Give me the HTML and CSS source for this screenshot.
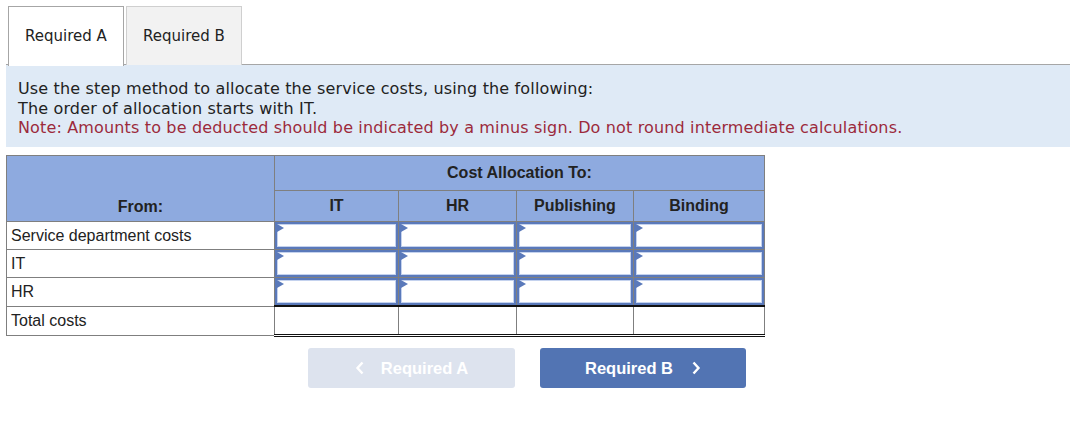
FILE: index.html
```html
<!DOCTYPE html>
<html>
<head>
<meta charset="utf-8">
<link rel="stylesheet" href="styles.css">
</head>
<body>
<div class="page">
  <div class="tabs">
    <div class="tab tab-active">Required A</div>
    <div class="tab">Required B</div>
  </div>
  <div class="info">
    <div>Use the step method to allocate the service costs, using the following:</div>
    <div>The order of allocation starts with IT.</div>
    <div class="note">Note: Amounts to be deducted should be indicated by a minus sign. Do not round intermediate calculations.</div>
  </div>
  <table class="grid">
    <colgroup>
      <col class="c-from"><col class="c-it"><col class="c-hr"><col class="c-pub"><col class="c-bind">
    </colgroup>
    <thead>
      <tr class="h1">
        <th class="from" rowspan="2">From:</th>
        <th colspan="4">Cost Allocation To:</th>
      </tr>
      <tr class="h2">
        <th>IT</th><th>HR</th><th>Publishing</th><th>Binding</th>
      </tr>
    </thead>
    <tbody>
      <tr>
        <td class="label">Service department costs</td>
        <td class="in"><div class="box"><span class="flag"></span></div></td>
        <td class="in"><div class="box"><span class="flag"></span></div></td>
        <td class="in"><div class="box"><span class="flag"></span></div></td>
        <td class="in"><div class="box"><span class="flag"></span></div></td>
      </tr>
      <tr>
        <td class="label">IT</td>
        <td class="in"><div class="box"><span class="flag"></span></div></td>
        <td class="in"><div class="box"><span class="flag"></span></div></td>
        <td class="in"><div class="box"><span class="flag"></span></div></td>
        <td class="in"><div class="box"><span class="flag"></span></div></td>
      </tr>
      <tr>
        <td class="label">HR</td>
        <td class="in"><div class="box"><span class="flag"></span></div></td>
        <td class="in"><div class="box"><span class="flag"></span></div></td>
        <td class="in"><div class="box"><span class="flag"></span></div></td>
        <td class="in"><div class="box"><span class="flag"></span></div></td>
      </tr>
      <tr class="total">
        <td class="label">Total costs</td>
        <td class="tot"></td>
        <td class="tot"></td>
        <td class="tot"></td>
        <td class="tot"></td>
      </tr>
    </tbody>
  </table>
  <div class="nav">
    <div class="btn btn-off">
      <svg class="chev" width="10" height="14" viewBox="0 0 10 14"><path d="M7.5 1.5 L2.5 7 L7.5 12.5" fill="none" stroke="#fff" stroke-width="2.4"/></svg>
      <span>Required A</span>
    </div>
    <div class="btn btn-on">
      <span>Required B</span>
      <svg class="chev" width="10" height="14" viewBox="0 0 10 14"><path d="M2.5 1.5 L7.5 7 L2.5 12.5" fill="none" stroke="#fff" stroke-width="2.4"/></svg>
    </div>
  </div>
</div>
</body>
</html>
```
FILE: styles.css
```css
html, body {
  margin: 0;
  padding: 0;
  background: #fff;
}
.page {
  padding: 6px 0 0 6px;
  width: 1064px;
}
.tabs {
  display: flex;
  gap: 2px;
  padding-left: 2px;
  border-bottom: 1px solid #a6a6a6;
  height: 58px;
}
.tab {
  width: 114px;
  height: 57px;
  border: 1px solid #cfcfcf;
  border-bottom: none;
  background: #f2f2f2;
  font-family: "DejaVu Sans", Verdana, sans-serif;
  font-size: 15px;
  color: #222;
  display: flex;
  align-items: center;
  justify-content: center;
  padding-bottom: 1px;
}
.tab-active {
  background: #fff;
  border-color: #a6a6a6;
  height: 58px;
  margin-bottom: -1px;
  position: relative;
}
.info {
  background: #dfeaf6;
  height: 82px;
  box-sizing: border-box;
  padding: 14px 0 0 12px;
  font-family: "DejaVu Sans", Verdana, sans-serif;
  font-size: 16px;
  letter-spacing: 0.15px;
  line-height: 19.5px;
  color: #222;
}
.note {
  color: #9c2a3c;
}
.grid {
  margin-top: 8px;
  border-collapse: collapse;
  font-family: "Liberation Sans", Arial, sans-serif;
  font-size: 16px;
  color: #222;
  table-layout: fixed;
  width: 758px;
}
.c-from { width: 268px; }
.c-it { width: 124px; }
.c-hr { width: 118px; }
.c-pub { width: 117px; }
.c-bind { width: 131px; }
.grid th {
  background: #8eaadf;
  border: 1px solid #7f7f7f;
  font-weight: bold;
  color: #222;
  padding: 0;
}
.h1 th { height: 34px; }
.h2 th { height: 29px; padding-bottom: 1px; }
.grid th.from {
  vertical-align: bottom;
  padding-bottom: 5px;
}
.grid td {
  border: 1px solid #7f7f7f;
  padding: 0;
  height: 27px;
  line-height: 18px;
}
.grid td.label {
  padding-left: 4px;
}
.grid td.in {
  padding: 0;
  position: relative;
}
.box {
  height: 27px;
  box-sizing: border-box;
  border: 2px solid #5a79ba;
  box-shadow: inset 0 0 0 1px #c4d2ee;
  background: #fff;
  position: relative;
}
.flag {
  position: absolute;
  left: 0;
  top: 0;
  width: 0;
  height: 0;
  border-top: 4px solid transparent;
  border-bottom: 4px solid transparent;
  border-left: 7px solid #5a79ba;
}
.grid td.tot {
  border-top: 2px solid #111;
  border-bottom: 3px double #111;
}
.nav {
  display: flex;
  gap: 25px;
  padding-left: 302px;
  margin-top: 11px;
}
.btn {
  width: 207px;
  height: 40px;
  border-radius: 3px;
  display: flex;
  align-items: center;
  justify-content: center;
  gap: 16px;
  font-family: "Liberation Sans", Arial, sans-serif;
  font-weight: bold;
  font-size: 16.5px;
  color: #fff;
}
.btn-off {
  background: #dde3ee;
}
.btn-on {
  background: #5274b3;
  width: 206px;
  gap: 18px;
}
.chev {
  display: block;
}
```
